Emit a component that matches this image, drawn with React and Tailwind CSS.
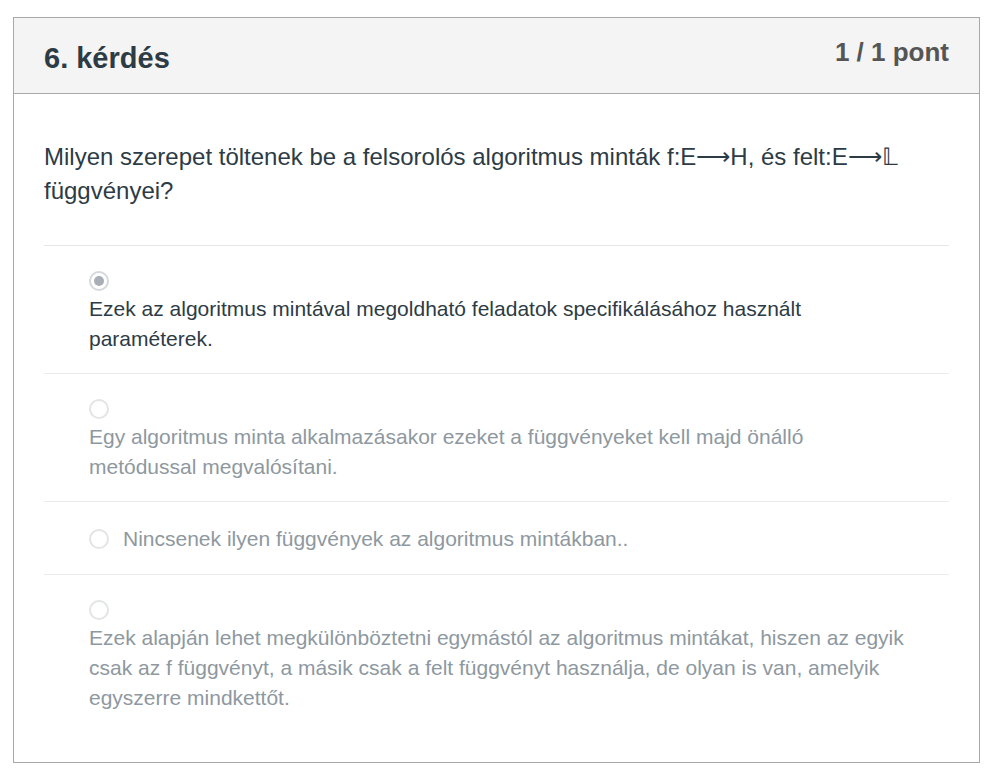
const options = [
  {
    text: 'Ezek az algoritmus mintával megoldható feladatok specifikálásához használt paraméterek.',
    selected: true,
  },
  {
    text: 'Egy algoritmus minta alkalmazásakor ezeket a függvényeket kell majd önálló metódussal megvalósítani.',
  },
  {
    text: 'Nincsenek ilyen függvények az algoritmus mintákban..',
    inline: true,
  },
  {
    text: 'Ezek alapján lehet megkülönböztetni egymástól az algoritmus mintákat, hiszen az egyik csak az f függvényt, a másik csak a felt függvényt használja, de olyan is van, amelyik egyszerre mindkettőt.',
  },
];

function Radio({ selected }) {
  if (selected) {
    return (
      <span className="inline-flex shrink-0 w-[20px] h-[20px] rounded-full border-[2px] border-[#d5d8dc] items-center justify-center">
        <span className="w-[10px] h-[10px] rounded-full bg-[#a9adb5]" />
      </span>
    );
  }
  return <span className="inline-block shrink-0 w-[20px] h-[20px] rounded-full border-[2px] border-[#e2e4e6]" />;
}

export default function App() {
  return (
    <div className="bg-white min-h-[776px] pt-[17px] pl-[13px] pr-[11px] font-['Liberation_Sans',Arial,sans-serif]">
      <div className="border border-[#a8a8a8] bg-white">
        <div className="bg-[#f4f4f4] border-b border-[#a8a8a8] h-[76px] px-[30px] flex justify-between items-start">
          <h2 className="text-[29px] font-bold text-[#2d3b45] leading-[34px] mt-[23px]">6. kérdés</h2>
          <div className="text-[26px] font-bold text-[#555555] leading-[30px] mt-[19px]">1 / 1 pont</div>
        </div>

        <div className="px-[30px] pt-[46px] pb-[30px]">
          <p className="text-[24px] leading-[34px] text-[#2d3b45]">
            Milyen szerepet töltenek be a felsorolós algoritmus minták f:E⟶H, és felt:E⟶𝕃 függvényei?
          </p>

          <div className="mt-[37px] border-t border-[#e6e6e6]">
            {options.map((o, i) => (
              <div
                key={i}
                className={`${i > 0 ? 'border-t border-[#ececec]' : ''} ${o.inline ? 'pt-[22px] pb-[20px]' : 'pt-[22px] pb-[19px]'} pl-[45px] pr-[39px] text-[21px] leading-[30px] ${o.selected ? 'text-[#2d3b45]' : 'text-[#8e989f]'}`}
              >
                {o.inline ? (
                  <div className="flex items-center gap-[14px]">
                    <Radio selected={o.selected} />
                    <span>{o.text}</span>
                  </div>
                ) : (
                  <>
                    <div className="h-[26px] flex items-center">
                      <Radio selected={o.selected} />
                    </div>
                    <div>{o.text}</div>
                  </>
                )}
              </div>
            ))}
          </div>
        </div>
      </div>
    </div>
  );
}
